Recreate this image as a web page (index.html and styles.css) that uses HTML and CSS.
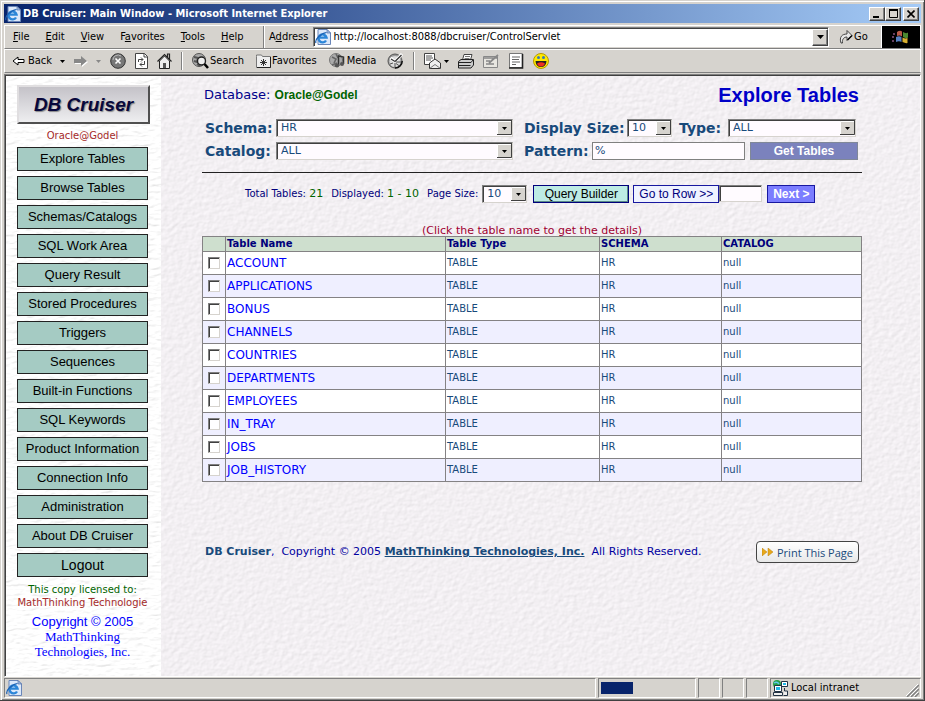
FILE: index.html
```html
<!DOCTYPE html>
<html lang="en">
<head>
<meta charset="utf-8">
<title>DB Cruiser: Main Window</title>
<link rel="stylesheet" href="styles.css">
</head>
<body>
<svg class="defs" aria-hidden="true">
  <defs>
    <symbol id="ie" viewBox="0 0 16 16">
      <path d="M3 .5h9l3.500 3.500v11.500H3z" fill="#dce8fa" stroke="#6a86b8"/>
      <path d="M12 .5v3.500h3.500z" fill="#a8c0e8" stroke="#5070a8" stroke-width=".7"/>
      <path d="M11 11.500A4 4 0 1 1 11.500 8.600H4.500" fill="none" stroke="#2c86d8" stroke-width="2.400"/>
      <path d="M1 14C-.5 11 5 4.500 11.500 3.500" fill="none" stroke="#1c62b4" stroke-width="1.200"/>
    </symbol>
    <symbol id="down" viewBox="0 0 7 4"><path d="M0 0h7L3.500 4z"/></symbol>
  </defs>
</svg>
<div class="window">
  <header class="titlebar">
    <svg class="ic"><use href="#ie"/></svg>
    <h1>DB Cruiser: Main Window - Microsoft Internet Explorer</h1>
    <div class="caption">
      <button aria-label="Minimize"><svg width="8" height="8"><path d="M0 6h6v2H0z"/></svg></button>
      <button aria-label="Maximize"><svg width="9" height="9"><path d="M.5 1h8v7.500h-8z" fill="none" stroke="#000"/><path d="M0 0h9v2H0z"/></svg></button>
      <button class="close" aria-label="Close"><svg width="8" height="8"><path d="M.5.500l7 7M7.500.500l-7 7" stroke="#000" stroke-width="1.600"/></svg></button>
    </div>
  </header>
  <div class="menubar">
    <nav class="menus" aria-label="Menu">
      <button><u>F</u>ile</button><button><u>E</u>dit</button><button><u>V</u>iew</button><button>F<u>a</u>vorites</button><button><u>T</u>ools</button><button><u>H</u>elp</button>
    </nav>
    <div class="address">
      <label for="url">A<u>d</u>dress</label>
      <div class="urlbox">
        <svg class="ic"><use href="#ie"/></svg>
        <input id="url" value="http://localhost:8088/dbcruiser/ControlServlet">
        <button class="drop" aria-label="Address history"><svg width="7" height="4"><use href="#down"/></svg></button>
      </div>
      <button class="go"><svg width="14" height="16" viewBox="0 0 14 16"><path d="M2 14C0 8 3 5 8 5V1.500l5 5-5 5V8C5 8 3 10 3.500 14z" fill="#e8e8e8" stroke="#444"/><path d="M8.500 11l4.500-4.500" stroke="#000" stroke-width="1.500"/></svg>Go</button>
    </div>
    <div class="flag"><svg width="18" height="16" viewBox="0 0 18 16"><path d="M5 3q3-2 5-.5v5Q8 6 5 7z" fill="#b85a48"/><path d="M11 3q3 2 5 .5v5q-2 1.500-5-.5z" fill="#4a8a30"/><path d="M4 8q3-1.500 5.500 0v5Q7 11.500 4 13z" fill="#5880c0"/><path d="M10.500 8.500q3 1.500 5 .5v5q-2 .5-5-1z" fill="#d8b030"/><path d="M1 4h2v2H1zM0 7h2v2H0zM0 11h2v2H0z" fill="#684060"/></svg></div>
  </div>
  <div class="toolbar">
    <button class="back"><svg width="13" height="10"><path d="M1 5l5-4v2.500h6v3H6V9z" fill="#fff" stroke="#000"/></svg>Back<svg class="tri" width="5" height="3"><use href="#down"/></svg></button>
    <button class="fwd" aria-label="Forward"><svg width="14" height="11"><path d="M1 4h7V1l6 5-6 5V8H1z" fill="#fff"/><path d="M0 3h7V0l6 5-6 5V7H0z" fill="#888"/></svg><svg class="tri dim" width="5" height="3"><use href="#down"/></svg></button>
    <button aria-label="Stop"><svg width="16" height="16"><circle cx="8" cy="8" r="7.300" fill="#777" stroke="#333"/><path d="M3 7a5 5 0 0 1 8-4" stroke="#bbb" fill="none"/><path d="M5.500 5.500l5 5M10.500 5.500l-5 5" stroke="#fff" stroke-width="1.600"/></svg></button>
    <button aria-label="Refresh"><svg width="13" height="16"><path d="M.5.500h9l3 3v12H.500z" fill="#fff" stroke="#444"/><path d="M9 .5v3.500h3.500" fill="none" stroke="#444"/><path d="M3.500 9V6.500H8M6 4.500l2 2-2 2M9.500 8v3.500H5M7 9.500l-2 2 2 2" fill="none" stroke="#444"/></svg></button>
    <button aria-label="Home"><svg width="15" height="16"><path d="M2.500 8v7.500h10V8l-5-5z" fill="#eee" stroke="#222"/><path d="M.5 8.500l7-7 7 7M10.500 4V1h2v5" fill="none" stroke="#222" stroke-width="1.200"/><path d="M6 10h3v5H6z" fill="#555"/></svg></button>
    <i class="sep"></i>
    <button class="txt"><svg width="17" height="16"><circle cx="7" cy="7" r="6.500" fill="#aaa" stroke="#555"/><path d="M2 4l4 1-1 4-3-1M5 11l3 2" stroke="#555" fill="none" stroke-width="2"/><circle cx="9.500" cy="8" r="4" fill="#eee" stroke="#222" stroke-width="1.400"/><path d="M12.500 11l3.500 4" stroke="#000" stroke-width="2.500"/></svg>Search</button>
    <button class="txt"><svg width="15" height="14"><path d="M.5 2.500V1h5l1 1.500h8v11H.500z" fill="#eee" stroke="#777"/><path d="M14.500 3v10.500H1" stroke="#222" fill="none"/><path d="M7.500 5v7M4 8.500h7M5 6l5 5M10 6l-5 5" stroke="#333"/></svg>Favorites</button>
    <button class="txt media"><svg width="17" height="16"><circle cx="7" cy="7" r="6.500" fill="#aaa" stroke="#777"/><path d="M3 4l4 2-2 4M7 1l2 4M3 12l5-2" stroke="#666" fill="none" stroke-width="1.600"/><path d="M9.500 12V3l5 1v7" fill="none" stroke="#333" stroke-width="1.500"/><ellipse cx="8" cy="12.500" rx="2.200" ry="2" fill="#555"/><ellipse cx="13" cy="11" rx="2" ry="2" fill="#555"/></svg>Media</button>
    <button aria-label="History"><svg width="17" height="16"><circle cx="8" cy="8" r="7" fill="#999" stroke="#555"/><circle cx="8" cy="8.500" r="5.500" fill="#ddd"/><path d="M8 8.500L15 1M8 8.500L3.500 5" fill="none" stroke="#fff" stroke-width="3"/><path d="M8 8.500L14.500 2M8 8.500L4 6" fill="none" stroke="#333" stroke-width="1.300"/><path d="M9 9h5M9 10.500l3.500 2.500M8 10v4M3 11l3-1" stroke="#555"/><path d="M15.200 8a7 7 0 0 1-7.200 7" fill="none" stroke="#111" stroke-width="1.500"/></svg></button>
    <i class="sep"></i>
    <button class="mail" aria-label="Mail"><svg width="17" height="16"><path d="M.5.500h10v11H.500z" fill="#fff" stroke="#444"/><path d="M2 3h6M2 5h7M2 7h5" stroke="#555"/><path d="M5.500 10l5.500-4 5.500 4v5.500h-11z" fill="#eee" stroke="#333"/><path d="M5.500 15.500l5.500-4 5.500 4" fill="none" stroke="#777"/></svg><svg class="tri" width="5" height="3"><use href="#down"/></svg></button>
    <button aria-label="Print"><svg width="16" height="15"><path d="M4.500 6L6 .5h8L12.500 6" fill="#fff" stroke="#444"/><path d="M7 2.500h5M6.500 4.500h5" stroke="#777"/><path d="M.5 7.500L3 5.500h12.500V11L13 14H.500z" fill="#ccc" stroke="#222"/><path d="M1 8.500h12L15 6M1 11.500h11.500" stroke="#222" fill="none"/></svg></button>
    <button aria-label="Edit"><svg width="16" height="14"><path d="M.5 2.500h14v11H.500z" fill="#e8e6e0" stroke="#888"/><path d="M1 4h13M3 7h4M3 10h8M6 9l9-8" stroke="#888" stroke-width="1.700"/></svg></button>
    <button aria-label="Discuss"><svg width="16" height="16"><path d="M1.500.500h13v14h-13z" fill="#fff" stroke="#777"/><path d="M14.500 1v14H1" fill="none" stroke="#222" stroke-width="1.600"/><path d="M4 4h8M4 6.500h7M4 9h8M4 11.500h4" stroke="#666"/></svg></button>
    <button aria-label="Messenger"><svg width="16" height="16"><circle cx="8" cy="8" r="7.500" fill="#ffea00" stroke="#b89800"/><path d="M2.500 8h11q-.5 6-5.500 6T2.500 8z" fill="#222"/><path d="M4 10.500q4-2.500 8 0-1 3-4 3t-4-3z" fill="#f03020"/><circle cx="5.500" cy="4.500" r="1.500" fill="#3a78b8"/><circle cx="10.500" cy="4.500" r="1.500" fill="#3a78b8"/></svg></button>
  </div>

  <div class="viewport">
    <aside class="side">
      <svg class="texture" aria-hidden="true"><filter id="marble" x="0" y="0" width="100%" height="100%"><feTurbulence type="fractalNoise" baseFrequency=".1 .3" numOctaves="3" seed="4"/><feDiffuseLighting surfaceScale=".6" lighting-color="#fff" diffuseConstant="1.230"><feDistantLight azimuth="60" elevation="55"/></feDiffuseLighting></filter><rect width="100%" height="100%" filter="url(#marble)"/></svg>
      <div class="logo">DB Cruiser</div>
      <p class="conn">Oracle@Godel</p>
      <nav class="nav" aria-label="Sections">
        <button>Explore Tables</button><button>Browse Tables</button><button>Schemas/Catalogs</button><button>SQL Work Area</button><button>Query Result</button><button>Stored Procedures</button><button>Triggers</button><button>Sequences</button><button>Built-in Functions</button><button>SQL Keywords</button><button>Product Information</button><button>Connection Info</button><button>Administration</button><button>About DB Cruiser</button><button class="logout">Logout</button>
      </nav>
      <p class="lic">This copy licensed to:<br><span>MathThinking Technologie</span></p>
      <p class="copy"><span>Copyright © 2005</span><br>MathThinking<br>Technologies, Inc.</p>
    </aside>
    <main class="main">
      <svg class="texture" aria-hidden="true"><filter id="paper" x="0" y="0" width="100%" height="100%"><feTurbulence type="fractalNoise" baseFrequency=".2 .24" numOctaves="2" seed="8"/><feDiffuseLighting surfaceScale=".4" lighting-color="#f4f1f4" diffuseConstant="1.160"><feDistantLight azimuth="225" elevation="58"/></feDiffuseLighting></filter><rect width="100%" height="100%" filter="url(#paper)"/></svg>
      <div class="content">
        <div class="head">
          <p class="db">Database: <b>Oracle@Godel</b></p>
          <h2>Explore Tables</h2>
        </div>
        <form class="filters">
          <div class="frow first">
            <label class="l1" for="schema">Schema:</label><select id="schema" class="wide"><option>HR</option></select>
            <label class="l2" for="size">Display Size:</label><select id="size" class="num"><option>10</option></select>
            <label class="l3" for="type">Type:</label><select id="type" class="type"><option>ALL</option></select>
          </div>
          <div class="frow">
            <label class="l1" for="catalog">Catalog:</label><select id="catalog" class="wide"><option>ALL</option></select>
            <label class="l2 pat" for="pattern">Pattern:</label><input id="pattern" class="pattern" value="%">
            <button type="button" class="get">Get Tables</button>
          </div>
        </form>
        <div class="pager">
          <span>Total Tables: <em>21</em></span><span>Displayed: <em>1 - 10</em></span><label for="page">Page Size:</label>
          <select id="page" class="num"><option>10</option></select>
          <button class="query">Query Builder</button>
          <span class="goto"><button>Go to Row &gt;&gt;</button><input aria-label="Row number"></span>
          <button class="next">Next &gt;</button>
        </div>
        <table>
          <caption>(Click the table name to get the details)</caption>
          <colgroup><col class="c0"><col class="c1"><col class="c2"><col class="c3"><col></colgroup>
          <thead><tr><th></th><th>Table Name</th><th>Table Type</th><th>SCHEMA</th><th>CATALOG</th></tr></thead>
          <tbody>
            <tr><td><input type="checkbox" aria-label="ACCOUNT"></td><td><a href="#">ACCOUNT</a></td><td>TABLE</td><td>HR</td><td>null</td></tr>
            <tr><td><input type="checkbox" aria-label="APPLICATIONS"></td><td><a href="#">APPLICATIONS</a></td><td>TABLE</td><td>HR</td><td>null</td></tr>
            <tr><td><input type="checkbox" aria-label="BONUS"></td><td><a href="#">BONUS</a></td><td>TABLE</td><td>HR</td><td>null</td></tr>
            <tr><td><input type="checkbox" aria-label="CHANNELS"></td><td><a href="#">CHANNELS</a></td><td>TABLE</td><td>HR</td><td>null</td></tr>
            <tr><td><input type="checkbox" aria-label="COUNTRIES"></td><td><a href="#">COUNTRIES</a></td><td>TABLE</td><td>HR</td><td>null</td></tr>
            <tr><td><input type="checkbox" aria-label="DEPARTMENTS"></td><td><a href="#">DEPARTMENTS</a></td><td>TABLE</td><td>HR</td><td>null</td></tr>
            <tr><td><input type="checkbox" aria-label="EMPLOYEES"></td><td><a href="#">EMPLOYEES</a></td><td>TABLE</td><td>HR</td><td>null</td></tr>
            <tr><td><input type="checkbox" aria-label="IN_TRAY"></td><td><a href="#">IN_TRAY</a></td><td>TABLE</td><td>HR</td><td>null</td></tr>
            <tr><td><input type="checkbox" aria-label="JOBS"></td><td><a href="#">JOBS</a></td><td>TABLE</td><td>HR</td><td>null</td></tr>
            <tr><td><input type="checkbox" aria-label="JOB_HISTORY"></td><td><a href="#">JOB_HISTORY</a></td><td>TABLE</td><td>HR</td><td>null</td></tr>
          </tbody>
        </table>
        <footer class="foot">
          <p><b>DB Cruiser</b>, &nbsp;Copyright © 2005 <a href="#">MathThinking Technologies, Inc.</a> &nbsp;All Rights Reserved.</p>
          <button class="print"><svg width="12" height="8"><path d="M0 0l5 4-5 4zM6 0l5 4-5 4z" fill="#e8a818" stroke="#b88010" stroke-width=".5"/></svg>Print This Page</button>
        </footer>
      </div>
    </main>
  </div>

  <div class="status">
    <div class="cell grow"><svg class="ic"><use href="#ie"/></svg></div>
    <div class="cell prog"><i></i></div>
    <div class="cell sm"></div><div class="cell sm"></div><div class="cell sm"></div>
    <div class="cell zone"><svg class="ic" viewBox="0 0 16 16"><circle cx="5" cy="4" r="4" fill="#28a048"/><path d="M2 3q3-2 5 1" stroke="#60c8f0" fill="none" stroke-width="1.500"/><path d="M9.500 1.500h6v5h-6zM2.500 5.500h7v6h-7z" fill="#fff" stroke="#234"/><path d="M11 3h3v2h-3zM4 7h4v3H4z" fill="#20b8e8"/><path d="M1.500 12.500h9v3h-9zM12.500 8v3h3v4.500h-4" fill="#eee" stroke="#234"/></svg>Local intranet
      <svg class="grip" width="13" height="13"><path d="M1 13L13 1M5 13l8-8M9 13l4-4" stroke="#808080" stroke-width="1.500"/><path d="M0 12L12 0M4 12l8-8M8 12l4-4" stroke="#fff"/></svg></div>
  </div>
</div>
</body>
</html>
```
FILE: styles.css
```css
* { box-sizing: border-box; }
html, body { height: 100%; margin: 0; }
body { font: 11px/14px "DejaVu Sans", Verdana, sans-serif; background: #d6d3ce; color: #000; }
button, input, select { font: inherit; color: inherit; margin: 0; padding: 0; border: 0; border-radius: 0; background: none; }
p, h1, h2 { margin: 0; font-weight: normal; }
svg { flex: none; display: block; }
.defs { position: absolute; width: 0; height: 0; }
.ic { width: 16px; height: 16px; }

.window { min-height: 100vh; display: flex; flex-direction: column; padding: 4px 3px 2px 4px; border-right: 1px solid #404040; border-bottom: 1px solid #404040; box-shadow: inset 1px 1px #d6d3ce, inset 2px 2px #fff, inset -1px -1px #808080; }
.titlebar, .menubar, .toolbar, .status { font-family: "DejaVu Sans Condensed", Tahoma, sans-serif; font-size: 11px; }

.titlebar { display: flex; align-items: center; height: 19px; padding: 0 2px 0 1px; background: linear-gradient(90deg, #08246b, #a5cbf7); color: #fff; }
.titlebar h1 { flex: 1; margin-left: 2px; font-size: 11px; font-weight: bold; white-space: nowrap; }
.caption { display: flex; }
.caption button { display: grid; place-items: center; width: 16px; height: 14px; background: #d6d3ce; border: 1px solid; border-color: #fff #404040 #404040 #fff; box-shadow: inset -1px -1px #808080; }
.caption .close { margin-left: 2px; }

.menubar { display: flex; height: 24px; margin-top: 2px; border: 1px solid; border-color: #fff #fff #808080; }
.menus { display: flex; align-items: center; width: 259px; padding-left: 3px; border-right: 1px solid #808080; }
.menus button { padding: 0 8px 0 5px; }
.menus button + button { padding-left: 8px; }
.address { flex: 1; display: flex; align-items: center; gap: 5px; padding-left: 4px; border-left: 1px solid #fff; min-width: 0; }
.urlbox { flex: 1; display: flex; align-items: center; height: 20px; background: #fff; border: 1px solid; border-color: #808080 #fff #fff #808080; box-shadow: inset 1px 1px #404040; padding-left: 1px; }
.urlbox input { flex: 1; min-width: 0; margin-left: 2px; }
.drop { display: grid; place-items: center; width: 16px; height: 17px; background: #d6d3ce; border: 1px solid; border-color: #fff #404040 #404040 #fff; box-shadow: inset -1px -1px #808080; }
.go { display: flex; align-items: center; gap: 1px; width: 47px; padding-left: 5px; }
.flag { display: grid; place-items: center; width: 39px; background: #000; border-left: 1px solid #fff; }

.toolbar { display: flex; align-items: center; height: 24px; padding-left: 7px; gap: 9px; border: 1px solid; border-color: #fff #fff #808080 #fff; }
.toolbar button { display: flex; align-items: center; gap: 2px; }
.toolbar .back { gap: 3px; }
.toolbar .tri { margin-left: 5px; }
.toolbar .fwd .tri { margin-left: 6px; }
.toolbar .mail .tri { margin-left: 1px; }
.toolbar .dim { fill: #888; }
.sep { width: 2px; height: 18px; background: #808080; border-right: 1px solid #fff; }
.toolbar .txt { margin-right: 3px; gap: 1px; }
.toolbar .txt.media { margin-right: 2px; }

.viewport { flex: 1; display: flex; margin-top: 1px; border: 1px solid; border-color: #808080 #fff #fff #808080; box-shadow: inset 1px 1px #404040; padding: 1px 0 0 1px; }
.texture { position: absolute; inset: 0; width: 100%; height: 100%; z-index: -1; }
.side, .main { position: relative; z-index: 0; }
.side { width: 155px; padding: 9px 11px 0; text-align: center; }
.logo { width: 133px; height: 39px; font: italic bold 19px/35px "Liberation Sans", Arial, sans-serif; color: #08083c; text-shadow: 1px 1px 1px #888; background: linear-gradient(#c4c2c8, #eeeef0); border: 2px solid; border-color: #e0dee0 #505050 #505050 #e0dee0; }
.conn { width: 131px; margin: 5px 0 4px; font-size: 10px; color: #a52a2a; }
.nav { display: flex; flex-direction: column; gap: 5px; width: 131px; }
.nav button { height: 24px; border: 1px solid #222; background: #a5cbc3; font: 13px/20px "Liberation Sans", Arial, sans-serif; white-space: nowrap; }
.nav .logout { font-size: 14px; }
.lic { width: 131px; margin-top: 6px; font-size: 10px; line-height: 13px; color: #006400; white-space: nowrap; }
.lic span { color: #a52a2a; }
.copy { width: 131px; margin-top: 5px; font: 13px/15px "Liberation Serif", "Times New Roman", serif; color: #00f; }
.copy span { font: 13px/15px "Liberation Sans", Arial, sans-serif; }

.main { flex: 1; padding: 9px 58px 0 41px; }
.head { display: flex; justify-content: space-between; padding: 0 3px 0 2px; }
.db { font-size: 13px; line-height: 20px; color: #00008b; }
.db b { font: bold 12px "Liberation Sans", Arial, sans-serif; color: #006400; }
.head h2 { font: bold 20px/20px "Liberation Sans", Arial, sans-serif; color: #0000c8; }

.filters { padding: 11px 4px 10px 3px; border-bottom: 1px solid #222; color: #184a7b; }
.frow { display: flex; align-items: center; height: 23px; }
.frow.first { padding-right: 2px; }
.frow label { font-size: 14px; font-weight: bold; white-space: nowrap; }
.l1 { width: 71px; }
.l2 { width: 103px; margin-left: 11px; }
.l2.pat { width: 68px; }
.l3 { width: 49px; margin-left: 7px; }
select { height: 18px; appearance: none; padding: 1px 20px 0 4px; font-size: 11px; color: #184a7b; border: 1px solid; border-color: #808080 #d6d3ce #d6d3ce #808080; box-shadow: inset 1px 1px #404040;
  background: #fffbff url("data:image/svg+xml,%3Csvg xmlns='http://www.w3.org/2000/svg' width='15' height='14'%3E%3Cpath fill='%23d6d3ce' d='M0 0h15v14H0z'/%3E%3Cpath d='M.5 14V.5H15' stroke='%23fff' fill='none'/%3E%3Cpath d='M14.500 0v13.500H0' stroke='%23404040' fill='none'/%3E%3Cpath d='M5 6h5L7.500 9z'/%3E%3C/svg%3E") no-repeat right center; }
.wide { flex: 1; }
.num { width: 45px; }
.type { width: 128px; }
.pattern { width: 153px; height: 18px; padding: 0 2px; border: 1px solid #808080; background: #fffbff; }
.get { width: 108px; height: 18px; margin-left: 5px; font: bold 12px "Liberation Sans", Arial, sans-serif; color: #fff; background: #7b82bd; border: 1px solid #808898; }

.pager { display: flex; align-items: center; height: 41px; padding-left: 43px; gap: 8px; font-size: 10px; color: #00007b; white-space: nowrap; }
.pager em { font-style: normal; font-size: 11px; color: #006400; }
.pager label { margin-right: -4px; }
.pager button { height: 18px; font: 12px "Liberation Sans", Arial, sans-serif; }
.pager .query { width: 96px; margin-left: -2px; color: #000; background: #bdebe4; border: 1px solid #00007b; box-shadow: inset -1px -1px #5a8a88; }
.goto { display: flex; margin-left: -4px; }
.goto button { width: 86px; border: 1px solid #1818a0; background: #eff3ff; }
.goto input { width: 43px; height: 17px; border: 1px solid; border-color: #808080 #d6d3ce #d6d3ce #808080; box-shadow: inset 1px 1px #404040; background: #fffbff; }
.pager .next { width: 48px; margin-left: -3px; font-weight: bold; color: #fff; background: #7b7dff; border: 1px solid #1818a0; }

table { width: 100%; margin-top: 11px; border-collapse: collapse; table-layout: fixed; color: #184a7b; }
caption { height: 11px; line-height: 11px; font-size: 11px; color: #a00030; }
.c0 { width: 23px; } .c1 { width: 220px; } .c2 { width: 154px; } .c3 { width: 122px; }
th, td { padding: 0 1px; border: 1px solid #848284; text-align: left; height: 23px; line-height: 12px; font-size: 10px; background: #fff; }
th { height: 15px; color: #00007b; background: #cedfce; }
tbody tr:nth-child(even) td { background: #efefff; }
td a { font-size: 12px; color: #00f; text-decoration: none; }
td input { appearance: none; display: block; width: 12px; height: 12px; margin-left: 4px; border: 1px solid; border-color: #808080 #d6d3ce #d6d3ce #808080; box-shadow: inset 1px 1px #404040; background: #fff; }

.foot { display: flex; align-items: center; justify-content: space-between; margin-top: 59px; padding: 0 3px; color: #0000a0; white-space: nowrap; }
.foot b, .foot a { font-weight: bold; color: #184a7b; }
.print { display: flex; align-items: center; justify-content: center; gap: 3px; width: 103px; height: 22px; border: 1px solid #444; border-radius: 4px; background: linear-gradient(#fff, #e8e8e8); font: 11px "Open Sans", sans-serif; color: #184a7b; }

.status { display: flex; gap: 2px; height: 20px; margin-top: 1px; }
.cell { display: flex; align-items: center; padding: 0 1px; border: 1px solid; border-color: #808080 #fff #fff #808080; }
.grow { flex: 1; }
.prog { width: 98px; }
.prog i { width: 32px; height: 12px; margin-left: 1px; background: #08246b; }
.sm { width: 22px; }
.zone { width: 151px; gap: 3px; white-space: nowrap; }
.grip { margin-left: auto; align-self: end; }
```
